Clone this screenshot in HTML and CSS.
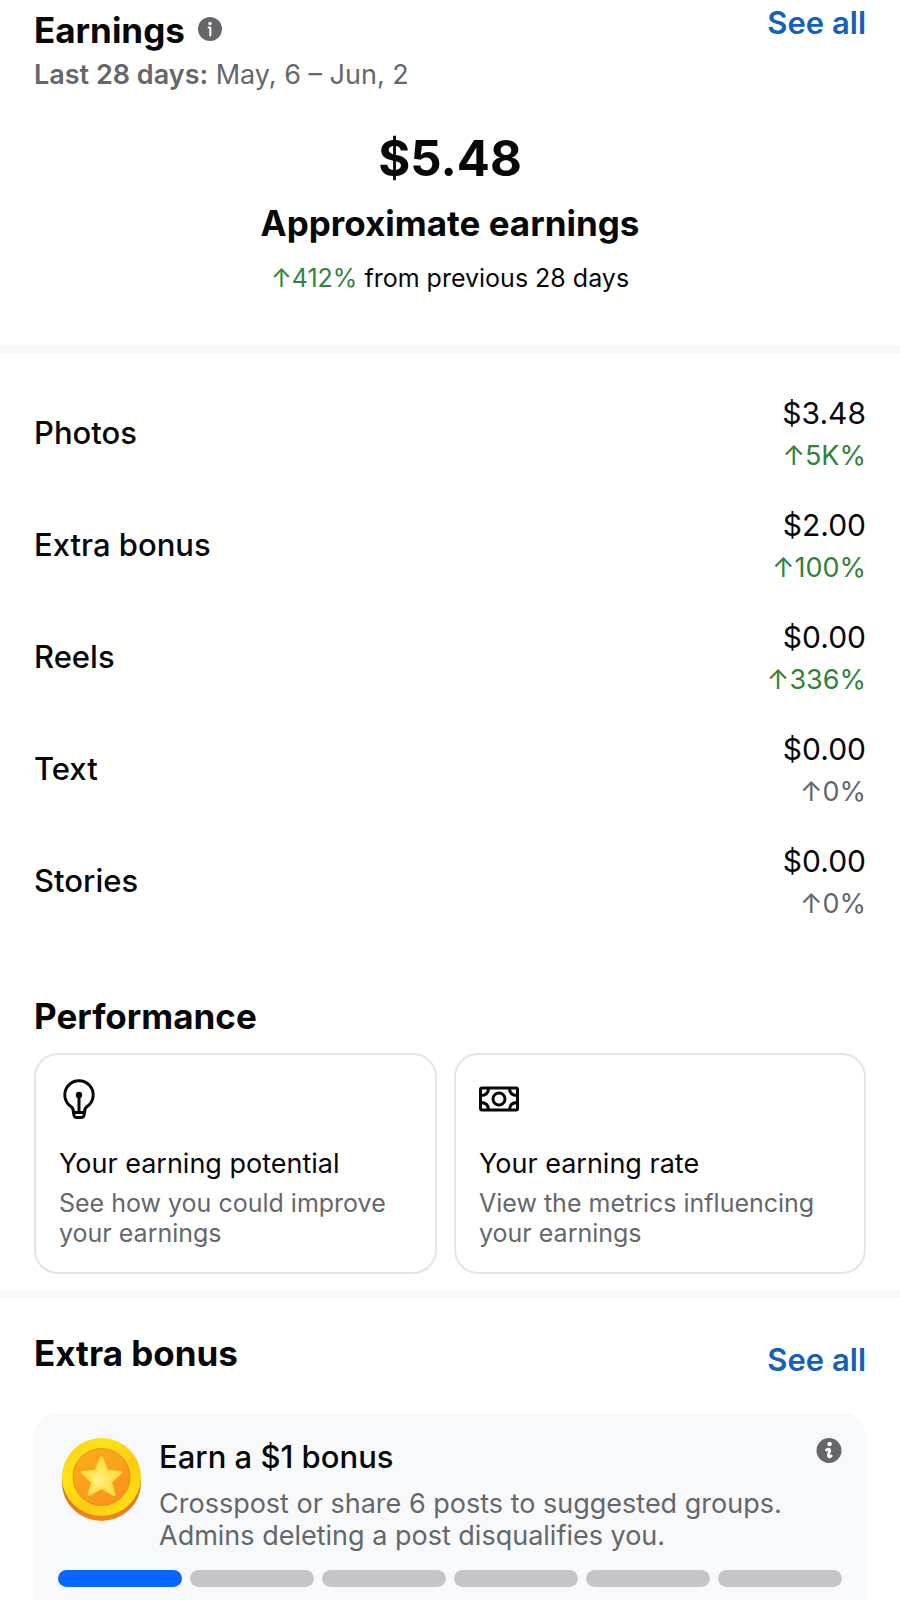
FILE: index.html
```
<!DOCTYPE html>
<html lang="en">
  <head>
    <meta charset="UTF-8" />
    <meta name="viewport" content="width=device-width, initial-scale=1.0" />
    <title>Earnings</title>
    <link rel="stylesheet" href="styles.css">
  </head>

  <body>
    <section class="earnings">
      <header class="section-header">
        <div class="heading">
          <h2>
            Earnings
            <button class="info-button" aria-label="About earnings">
              <svg viewBox="0 0 26 26" width="26" height="26">
                <circle cx="12" cy="12" r="12" fill="#65676b" />
                <circle cx="12" cy="6.5" r="1.7" fill="#fff" />
                <path d="M10.6 10.4h1.7v8" fill="none" stroke="#fff" stroke-width="2" stroke-linecap="round" stroke-linejoin="round" />
              </svg>
            </button>
          </h2>
          <p class="period"><strong>Last 28 days:</strong> May, 6 – Jun, 2</p>
        </div>
        <a class="see-all" href="#earnings">See all</a>
      </header>

      <div class="summary">
        <p class="total">$5.48</p>
        <h2>Approximate earnings</h2>
        <p class="change"><span class="up">↑412%</span> from previous 28 days</p>
      </div>
    </section>

    <section class="breakdown">
      <ul class="sources">
        <li>
          <span class="source">Photos</span>
          <div class="figures">
            <span class="amount">$3.48</span>
            <span class="percent up">↑5K%</span>
          </div>
        </li>
        <li>
          <span class="source">Extra bonus</span>
          <div class="figures">
            <span class="amount">$2.00</span>
            <span class="percent up">↑100%</span>
          </div>
        </li>
        <li>
          <span class="source">Reels</span>
          <div class="figures">
            <span class="amount">$0.00</span>
            <span class="percent up">↑336%</span>
          </div>
        </li>
        <li>
          <span class="source">Text</span>
          <div class="figures">
            <span class="amount">$0.00</span>
            <span class="percent">↑0%</span>
          </div>
        </li>
        <li>
          <span class="source">Stories</span>
          <div class="figures">
            <span class="amount">$0.00</span>
            <span class="percent">↑0%</span>
          </div>
        </li>
      </ul>

      <h2>Performance</h2>
      <div class="cards">
        <a class="card" href="#potential">
          <svg viewBox="0 0 40 40" width="40" height="40" fill="none" stroke="#080809" stroke-width="3" stroke-linejoin="round">
            <path d="M14.4 33C14.4 30 14 29 12 27.6A14.2 14.2 0 1 1 28 27.6C26 29 25.6 30 25.6 33L25 36.2Q24.5 38.5 22.5 38.5H17.5Q15.5 38.5 15 36.2Z" />
            <path d="M14.4 33.5h11.2M20 16v17" />
            <circle cx="20" cy="16" r="3.2" fill="#080809" stroke="none" />
          </svg>
          <h3>Your earning potential</h3>
          <p>See how you could improve your earnings</p>
        </a>
        <a class="card" href="#rate">
          <svg viewBox="0 0 40 40" width="40" height="40" fill="none" stroke="#080809" stroke-width="3">
            <rect x="1.5" y="9" width="37" height="22" rx="1.5" />
            <circle cx="20" cy="20" r="6" />
            <path d="M9.5 9q0 7.5-8 7.5M30.5 9q0 7.5 8 7.5M9.5 31q0-7.5-8-7.5M30.5 31q0-7.5 8-7.5" />
          </svg>
          <h3>Your earning rate</h3>
          <p>View the metrics influencing your earnings</p>
        </a>
      </div>
    </section>

    <section class="bonus">
      <header class="section-header">
        <h2>Extra bonus</h2>
        <a class="see-all" href="#bonus">See all</a>
      </header>

      <div class="bonus-card">
        <div class="bonus-info">
          <svg class="coin" viewBox="0 0 84 84" width="84" height="84">
            <defs>
              <linearGradient id="edge" x1="0" y1="0" x2="0" y2="1">
                <stop offset="0.5" stop-color="#d9772a" />
                <stop offset="1" stop-color="#f5871a" />
              </linearGradient>
              <linearGradient id="rim" x1="0" y1="0" x2="1" y2="1">
                <stop offset="0" stop-color="#fdc915" />
                <stop offset="0.3" stop-color="#ffe414" />
                <stop offset="0.6" stop-color="#fdcb12" />
                <stop offset="0.85" stop-color="#ffdf12" />
                <stop offset="1" stop-color="#f9b816" />
              </linearGradient>
              <linearGradient id="face" x1="0" y1="0" x2="0.6" y2="1">
                <stop offset="0" stop-color="#fbb01c" />
                <stop offset="1" stop-color="#f9941c" />
              </linearGradient>
              <radialGradient id="star" cx="0.4" cy="0.6" r="0.6">
                <stop offset="0" stop-color="#fff08a" />
                <stop offset="1" stop-color="#ffdc32" />
              </radialGradient>
            </defs>
            <path d="M4 40v6a39.5 38 0 0 0 79 0v-6z" fill="url(#edge)" />
            <ellipse cx="43.5" cy="40" rx="39.5" ry="39" fill="url(#rim)" />
            <circle cx="43.5" cy="40" r="28.5" fill="url(#face)" stroke="#e88f14" />
            <path d="M43.5 21l5.6 13.2 13.4 1.2-10.2 9.5 3.7 12.6-12.5-7-12.5 7 3.7-12.6-10.2-9.5 13.4-1.2z" fill="url(#star)" stroke="#ffe04a" stroke-width="3" stroke-linejoin="round" />
          </svg>
          <div class="bonus-text">
            <h3>Earn a $1 bonus</h3>
            <p>Crosspost or share 6 posts to suggested groups. Admins deleting a post disqualifies you.</p>
          </div>
          <button class="info-button" aria-label="About this bonus">
            <svg viewBox="0 0 26 26" width="26" height="26">
              <circle cx="13" cy="13.5" r="12.5" fill="#65676b" />
              <circle cx="13.6" cy="7" r="2.3" fill="#fff" />
              <path d="M10.5 13q2.8-1.8 3.2 0 .2 1-.9 3.4-.9 3 .4 3.3.9.2 2-.7" fill="none" stroke="#fff" stroke-width="2.8" stroke-linecap="round" />
            </svg>
          </button>
        </div>
        <div class="steps" role="img" aria-label="1 of 6 posts shared">
          <span class="step done"></span>
          <span class="step"></span>
          <span class="step"></span>
          <span class="step"></span>
          <span class="step"></span>
          <span class="step"></span>
        </div>
      </div>
    </section>
  </body>
</html>
```
FILE: styles.css
```
* {
  box-sizing: border-box;
}

body {
  margin: 0;
  font-family: Inter, "Liberation Sans", sans-serif;
  color: #080809;
  background-color: #fff;
}

h2,
h3,
p,
ul {
  margin: 0;
  padding: 0;
}

h2 {
  display: flex;
  align-items: center;
  gap: 13px;
  font-size: 35px;
  line-height: 42px;
  font-weight: 700;
}

a {
  color: inherit;
  text-decoration: none;
}

section {
  padding: 0 34px;
}

.section-header {
  display: flex;
  justify-content: space-between;
  align-items: flex-start;
}

.see-all {
  font-size: 31px;
  line-height: 38px;
  font-weight: 600;
  color: #1461b8;
}

.info-button {
  display: flex;
  flex-shrink: 0;
  padding: 0;
  border: none;
  background: none;
  cursor: pointer;
}

.up {
  color: #31833a;
}

/* Earnings */

.earnings {
  padding-top: 4px;
  padding-bottom: 51px;
  border-bottom: 8px solid #f7f9fb;
}

.heading {
  padding-top: 5px;
}

.period {
  margin-top: 8px;
  font-size: 27px;
  line-height: 32px;
  color: #65676b;
}

.period strong {
  font-weight: 600;
}

.summary {
  display: flex;
  flex-direction: column;
  align-items: center;
  margin-top: 38px;
}

.total {
  margin-bottom: 13px;
  font-size: 49px;
  line-height: 60px;
  font-weight: 700;
}

.change {
  margin-top: 18px;
  font-size: 25px;
  line-height: 32px;
}

/* Breakdown and performance */

.breakdown {
  padding-top: 41px;
  padding-bottom: 17px;
  border-bottom: 8px solid #f7f9fb;
}

.sources {
  display: flex;
  flex-direction: column;
  gap: 34px;
  margin-bottom: 75px;
  list-style: none;
}

.sources li {
  display: flex;
  justify-content: space-between;
  align-items: center;
}

.source {
  font-size: 31px;
  line-height: 38px;
  font-weight: 500;
}

.figures {
  display: flex;
  flex-direction: column;
  align-items: flex-end;
  gap: 8px;
}

.amount {
  font-size: 30px;
  line-height: 38px;
}

.percent {
  font-size: 27px;
  line-height: 32px;
  color: #65676b;
}

.percent.up {
  color: #31833a;
}

.cards {
  display: grid;
  grid-template-columns: 403fr 412fr;
  gap: 17px;
  margin-top: 16px;
}

.card {
  padding: 24px 23px;
  border: 2px solid #e4e5e7;
  border-radius: 24px;
}

.card svg {
  display: block;
  margin-bottom: 29px;
}

.card h3 {
  font-size: 27px;
  line-height: 32px;
  font-weight: 400;
}

.card p {
  margin-top: 8px;
  font-size: 25px;
  line-height: 30px;
  color: #65676b;
}

/* Extra bonus */

.bonus {
  padding-top: 33px;
}

.bonus .see-all {
  margin-top: 9px;
}

.bonus-card {
  margin-top: 34px;
  padding: 24px 24px 13px;
  border-radius: 24px 24px 0 0;
  background-color: #f7f9fb;
}

.bonus-info {
  display: flex;
  align-items: flex-start;
}

.coin {
  flex-shrink: 0;
  margin-right: 17px;
}

.bonus-text {
  flex: 1;
  padding-top: 1px;
}

.bonus-text h3 {
  font-size: 31px;
  line-height: 38px;
  font-weight: 500;
}

.bonus-text p {
  margin-top: 12px;
  font-size: 27px;
  line-height: 32px;
  color: #65676b;
}

.steps {
  display: flex;
  gap: 8px;
  margin-top: 18px;
}

.step {
  flex: 1;
  height: 17px;
  border-radius: 9px;
  background-color: #c6c6c8;
}

.step.done {
  background-color: #0866ff;
}
```
